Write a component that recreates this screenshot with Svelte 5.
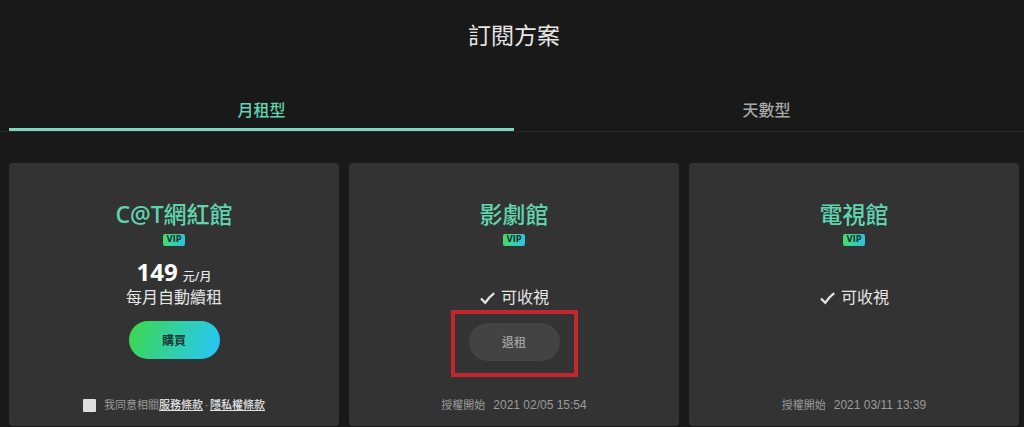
<script lang="ts">
  type Plan = {
    id: string;
    name: string;
    price?: number;
    cancelable?: boolean;
    since?: string;
  };

  const tabs = ['月租型', '天數型'];
  let active = $state(0);
  let agreed = $state(false);

  const plans: Plan[] = [
    { id: 'cat', name: 'C@T網紅館', price: 149 },
    { id: 'drama', name: '影劇館', cancelable: true, since: '2021 02/05 15:54' },
    { id: 'tv', name: '電視館', since: '2021 03/11 13:39' }
  ];
</script>

<main>
  <h1>訂閱方案</h1>

  <div class="tabs" role="tablist">
    {#each tabs as tab, i}
      <button
        type="button"
        role="tab"
        class="tab"
        class:active={active === i}
        aria-selected={active === i}
        onclick={() => (active = i)}
      >{tab}</button>
    {/each}
  </div>

  <div class="plans">
    {#each plans as plan (plan.id)}
      <section class="card">
        <h2>{plan.name}</h2>
        <span class="vip">VIP</span>

        <div class="info">
          {#if plan.price}
            <p class="price"><strong>{plan.price}</strong><span>元/月</span></p>
            <p class="note">每月自動續租</p>
          {:else}
            <p class="note">
              <svg width="16" height="16" viewBox="0 0 16 16" aria-hidden="true">
                <path d="M2 9.4 L6.2 13.8 Q9.8 8.4 15.2 4.2" fill="none" stroke="currentColor" stroke-width="2.2" />
              </svg>
              可收視
            </p>
          {/if}
        </div>

        {#if plan.price}
          <button type="button" class="pill buy">購買</button>
        {:else if plan.cancelable}
          <div class="marked">
            <button type="button" class="pill">退租</button>
          </div>
        {/if}

        <div class="foot">
          {#if plan.since}
            <span>授權開始</span>
            <time>{plan.since}</time>
          {:else}
            <input id="agree" type="checkbox" bind:checked={agreed} />
            <label for="agree">我同意相關<a href="#terms">服務條款</a><span class="dot">·</span><a href="#privacy">隱私權條款</a></label>
          {/if}
        </div>
      </section>
    {/each}
  </div>
</main>

<style>
  :global(body) {
    background: #191919;
  }

  main {
    color: #e6e6e6;
    font-family: "Noto Sans", "Noto Sans CJK TC", sans-serif;
  }

  h1, h2, p {
    margin: 0;
    font-weight: 400;
  }

  h1 {
    padding: 19px 5px 0 9px;
    font-size: 23px;
    line-height: 32px;
    text-align: center;
  }

  .tabs {
    display: flex;
    margin-top: 41px;
    padding: 0 5px 0 9px;
    border-bottom: 1px solid #272727;
  }

  .tab {
    flex: 1;
    padding: 0;
    border: none;
    border-bottom: 3px solid transparent;
    background: none;
    color: #a8a8a8;
    font: inherit;
    font-size: 16px;
    font-weight: 500;
    line-height: 36px;
    cursor: pointer;
  }

  .tab.active {
    color: #63d3b0;
    border-bottom-color: #7fd6bc;
  }

  .plans {
    display: grid;
    grid-template-columns: repeat(3, 1fr);
    gap: 10px;
    padding: 31px 5px 1px 9px;
  }

  .card {
    display: flex;
    flex-direction: column;
    align-items: center;
    padding: 33px 8px 13px;
    border-radius: 4px;
    background: #333333;
  }

  h2 {
    color: #5fd6b0;
    font-size: 23px;
    font-weight: 500;
    line-height: 36px;
  }

  .vip {
    margin-top: 2px;
    padding: 0 3px;
    border-radius: 2px;
    background: linear-gradient(100deg, #4bd964, #2cc4e4);
    color: #17352f;
    font-family: "DejaVu Sans", sans-serif;
    font-size: 8px;
    font-weight: 700;
    line-height: 12px;
  }

  .info {
    display: flex;
    flex-direction: column;
    align-items: center;
    justify-content: flex-end;
    min-height: 62px;
  }

  .price {
    display: flex;
    align-items: baseline;
    gap: 5px;
    font-size: 12px;
    font-weight: 500;
    line-height: 18px;
  }

  .price strong {
    color: #ffffff;
    font-family: "Open Sans", "Noto Sans", sans-serif;
    font-size: 24px;
    font-weight: 700;
  }

  .note {
    display: flex;
    align-items: center;
    gap: 6px;
    font-size: 16px;
    line-height: 22px;
  }

  .pill {
    display: block;
    width: 91px;
    height: 38px;
    padding: 0;
    border: none;
    border-radius: 19px;
    background: #434343;
    color: #a3a3a3;
    font: inherit;
    font-size: 12px;
    font-weight: 500;
    cursor: pointer;
  }

  .buy {
    margin-top: 13px;
    background: linear-gradient(110deg, #3dd65c 10%, #27c8ee 90%);
    color: #173a36;
    font-weight: 700;
  }

  .marked {
    position: relative;
    margin-top: 15px;
  }

  .marked::after {
    content: "";
    position: absolute;
    inset: -13px -18px -16px;
    border: 4px solid #c4262d;
    pointer-events: none;
  }

  .foot {
    display: flex;
    align-items: center;
    gap: 8px;
    margin-top: auto;
    padding-top: 36px;
    color: #9b9b9b;
    font-size: 11px;
    line-height: 16px;
  }

  time {
    font-family: "Liberation Sans", Arial, sans-serif;
    font-size: 12px;
  }

  input {
    appearance: none;
    width: 13px;
    height: 13px;
    margin: 0;
    border-radius: 1px;
    background: #dedede;
  }

  input:checked {
    background: #5fd6b0;
  }

  a {
    color: #e2e2e2;
    font-weight: 500;
  }

  .dot {
    padding: 0 2px;
  }
</style>
